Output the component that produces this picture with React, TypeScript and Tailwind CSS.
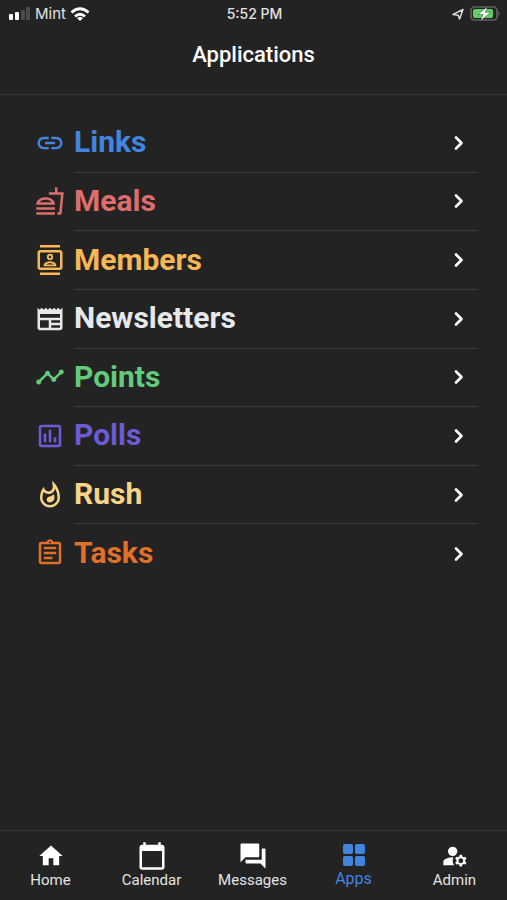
import type { ComponentType } from 'react';
import {
  MdCalendarToday,
  MdForum,
  MdHome,
  MdLink,
  MdManageAccounts,
  MdOutlineAssignment,
  MdOutlineContacts,
  MdOutlineFastfood,
  MdOutlineNewspaper,
  MdOutlinePoll,
  MdOutlineWhatshot,
  MdTimeline,
} from 'react-icons/md';

type Icon = ComponentType<{ className?: string }>;

const apps: { label: string; icon: Icon; color: string }[] = [
  { label: 'Links', icon: MdLink, color: 'text-[#4285e0]' },
  { label: 'Meals', icon: MdOutlineFastfood, color: 'text-[#dd6e6c]' },
  { label: 'Members', icon: MdOutlineContacts, color: 'text-[#f6b755]' },
  { label: 'Newsletters', icon: MdOutlineNewspaper, color: 'text-[#e6e8ea]' },
  { label: 'Points', icon: MdTimeline, color: 'text-[#62cb7b]' },
  { label: 'Polls', icon: MdOutlinePoll, color: 'text-[#6c5bd6]' },
  { label: 'Rush', icon: MdOutlineWhatshot, color: 'text-[#f8d586]' },
  { label: 'Tasks', icon: MdOutlineAssignment, color: 'text-[#e0702a]' },
];

function GridIcon({ className }: { className?: string }) {
  return (
    <svg viewBox="0 0 24 24" fill="currentColor" className={className} aria-hidden="true">
      <rect x="1" y="1" width="10" height="10" rx="2" />
      <rect x="13" y="1" width="10" height="10" rx="2" />
      <rect x="1" y="13" width="10" height="10" rx="2" />
      <rect x="13" y="13" width="10" height="10" rx="2" />
    </svg>
  );
}

const tabs: { label: string; icon: Icon; size: string; active?: boolean }[] = [
  { label: 'Home', icon: MdHome, size: 'size-7' },
  { label: 'Calendar', icon: MdCalendarToday, size: 'size-[30px]' },
  { label: 'Messages', icon: MdForum, size: 'size-[30px]' },
  { label: 'Apps', icon: GridIcon, size: 'size-6', active: true },
  { label: 'Admin', icon: MdManageAccounts, size: 'size-7' },
];

function StatusBar() {
  return (
    <div className="grid h-7 grid-cols-3 items-center pr-1.5 pl-2 font-['Inter',sans-serif] text-[15px] text-[#e4e4e4]">
      <div className="flex items-center gap-1">
        <svg viewBox="0 0 23 14" className="h-[14px] w-[23px]" aria-hidden="true">
          <rect x="1" y="7" width="4" height="6" rx="1" fill="#fff" />
          <rect x="7" y="5" width="4" height="8" rx="1" fill="#fff" />
          <rect x="13" y="3" width="4" height="10" rx="1" fill="#4c4c4c" />
          <rect x="18" y="0" width="4" height="13" rx="1" fill="#4c4c4c" />
        </svg>
        <span>Mint</span>
        <svg viewBox="0 0 20 15" className="h-[15px] w-5" fill="none" stroke="#fff" strokeWidth="2.8" aria-hidden="true">
          <path d="M1.5 5.5 Q10 -2 18.5 5.5" />
          <path d="M5 9.4 Q10 5 15 9.4" />
          <path d="M10 14 L7 11.2 Q10 9 13 11.2 Z" fill="#fff" stroke="none" />
        </svg>
      </div>
      <div className="text-center text-sm font-medium">5:52 PM</div>
      <div className="flex items-center justify-end gap-1.5">
        <svg viewBox="0 0 12 12" className="size-3" fill="none" stroke="#ddd" strokeWidth="1.5" strokeLinejoin="round" aria-hidden="true">
          <path d="M1 6.4 L11 1.5 L7.6 11 L6.2 7.2 Z" />
        </svg>
        <svg viewBox="0 0 31 16" className="h-4 w-[31px]" aria-hidden="true">
          <rect x="1" y="1" width="26" height="13" rx="3.5" fill="none" stroke="#636363" strokeWidth="1.6" />
          <path d="M28.5 5 Q31 7.5 28.5 10 Z" fill="#636363" />
          <rect x="3" y="3" width="20" height="9" rx="2" fill="#5fd065" />
          <path d="M17.5 0.5 L8 8.5 H13 L10.5 15 L20.5 6.3 H15.3 Z" fill="#fff" stroke="#232323" strokeWidth="0.4" />
        </svg>
      </div>
    </div>
  );
}

export default function App() {
  return (
    <div className="flex min-h-screen flex-col bg-[#232323] font-['Roboto',sans-serif] text-white">
      <StatusBar />

      <header className="flex h-[67px] items-start justify-center border-b border-[#383838] pt-[11px]">
        <h1 className="text-[22px] leading-8 font-medium">Applications</h1>
      </header>

      {/* App list */}
      <main className="flex-1 pt-[19px]">
        <ul className="grid min-h-[469px] auto-rows-fr pr-[29px] pl-[35px]">
          {apps.map(({ label, icon: AppIcon, color }, i) => (
            <li key={label} className="flex">
              <button type="button" className="flex w-full items-stretch gap-[9px] text-left">
                <span className={`flex items-center pb-px ${color}`}>
                  <AppIcon className="size-[30px]" />
                </span>
                <span
                  className={`flex flex-1 items-center justify-between pr-[14px] ${
                    i < apps.length - 1 ? 'border-b border-[#3b3b3b]' : ''
                  }`}
                >
                  <span className={`pb-px text-[30px] leading-9 font-bold ${color}`}>{label}</span>
                  <svg
                    viewBox="0 0 10 16"
                    className="h-4 w-[10px]"
                    fill="none"
                    stroke="#fff"
                    strokeWidth="2.6"
                    strokeLinecap="round"
                    strokeLinejoin="round"
                    aria-hidden="true"
                  >
                    <path d="M2 2.5 L7.5 8 L2 13.5" />
                  </svg>
                </span>
              </button>
            </li>
          ))}
        </ul>
      </main>

      {/* Tab bar */}
      <nav className="grid h-[70px] grid-cols-5 border-t border-[#363636] pr-[2px]">
        {tabs.map(({ label, icon: TabIcon, size, active }) => (
          <a
            key={label}
            href="#"
            aria-current={active ? 'page' : undefined}
            className={`flex flex-col items-center ${active ? 'pt-2.5 text-[#4285e0]' : 'pt-[11px] text-white'}`}
          >
            <span className="flex h-7 items-center">
              <TabIcon className={size} />
            </span>
            <span className={active ? 'text-base leading-5' : 'text-[15px] leading-5 text-[#e4e4e4]'}>{label}</span>
          </a>
        ))}
      </nav>
    </div>
  );
}
